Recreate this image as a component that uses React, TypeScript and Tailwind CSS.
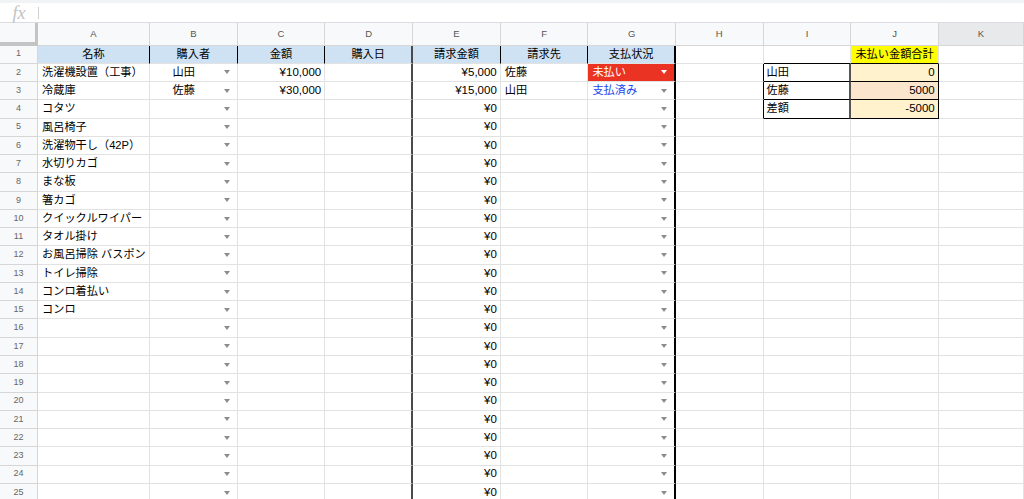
import React from "react";

const FONT = { fontFamily: '"Liberation Sans", "Noto Sans CJK JP", sans-serif' };

const letters = ["A", "B", "C", "D", "E", "F", "G", "H", "I", "J", "K"];
const widths = [
  "w-[112px]",
  "w-[87.6px]",
  "w-[87.6px]",
  "w-[88px]",
  "w-[87.6px]",
  "w-[87.6px]",
  "w-[87.6px]",
  "w-[87.6px]",
  "w-[87.8px]",
  "w-[87.4px]",
  "flex-1",
];

const colA = [
  "名称",
  "洗濯機設置（工事）",
  "冷蔵庫",
  "コタツ",
  "風呂椅子",
  "洗濯物干し（42P）",
  "水切りカゴ",
  "まな板",
  "箸カゴ",
  "クイックルワイパー",
  "タオル掛け",
  "お風呂掃除 バスポン",
  "トイレ掃除",
  "コンロ着払い",
  "コンロ",
];

function Arrow({ white }: { white?: boolean }) {
  return (
    <span
      className={
        white
          ? "mr-[7px] h-0 w-0 shrink-0 border-l-[3.5px] border-r-[3.5px] border-t-[4px] border-l-transparent border-r-transparent border-t-white"
          : "mr-[7px] h-0 w-0 shrink-0 border-l-[3.5px] border-r-[3.5px] border-t-[4px] border-l-transparent border-r-transparent border-t-[#8c8c8c]"
      }
    />
  );
}

function cellBorder(r: number, c: number): string {
  let cls = "border-r border-b border-[#e2e2e2]";
  if (c === 3) cls += " border-r-2 border-r-[#4a4a4a]";
  else if (c === 6) cls += " border-r-2 border-r-black";
  else if (r === 1 && (c === 0 || c === 1 || c === 2 || c === 4 || c === 5)) cls += " border-r-black";
  if (c === 7 && r >= 2 && r <= 4) cls += " border-r-black";
  if (c === 8 && r >= 2 && r <= 4) cls += " border-r-2 border-r-[#555555]";
  if (c === 9 && r >= 2 && r <= 4) cls += " border-r-black";
  if ((c === 8 || c === 9) && r >= 1 && r <= 4) cls += " border-b-black";
  return cls;
}

function cellBg(r: number, c: number): string {
  if (r === 1 && c <= 6) return "bg-[#cfe2f3]";
  if (r === 2 && c === 6) return "bg-[#ea3323]";
  if (r === 1 && c === 9) return "bg-[#ffff00]";
  if ((r === 2 || r === 4) && c === 9) return "bg-[#fff2cc]";
  if (r === 3 && c === 9) return "bg-[#fce5cd]";
  return "bg-white";
}

function CellContent({ r, c }: { r: number; c: number }) {
  const textCls = "text-[11.2px] text-[#000] leading-none";
  const numCls = "text-[11.5px] text-[#000] leading-none";
  if (r === 1) {
    if (c <= 6) {
      const h = ["名称", "購入者", "金額", "購入日", "請求金額", "請求先", "支払状況"][c];
      return <div className={"flex-1 text-center " + textCls}>{h}</div>;
    }
    if (c === 9) return <div className={"flex-1 text-center " + textCls}>未払い金額合計</div>;
    return null;
  }
  if (c === 0) {
    const v = colA[r - 1];
    return v ? <div className={"flex-1 pl-[4px] " + textCls}>{v}</div> : null;
  }
  if (c === 1) {
    const v = r === 2 ? "山田" : r === 3 ? "佐藤" : "";
    return (
      <>
        <div className={"flex-1 pr-[6px] text-center " + textCls}>{v}</div>
        <Arrow />
      </>
    );
  }
  if (c === 2) {
    const v = r === 2 ? "¥10,000" : r === 3 ? "¥30,000" : "";
    return <div className={"flex-1 pr-[3px] text-right " + numCls}>{v}</div>;
  }
  if (c === 4) {
    const v = r === 2 ? "¥5,000" : r === 3 ? "¥15,000" : "¥0";
    return <div className={"flex-1 pr-[3px] text-right " + numCls}>{v}</div>;
  }
  if (c === 5) {
    const v = r === 2 ? "佐藤" : r === 3 ? "山田" : "";
    return <div className={"flex-1 pl-[4px] " + textCls}>{v}</div>;
  }
  if (c === 6) {
    if (r === 2)
      return (
        <>
          <div className="flex-1 pl-[4px] text-[11.2px] leading-none text-white">未払い</div>
          <Arrow white />
        </>
      );
    if (r === 3)
      return (
        <>
          <div className="flex-1 pl-[4px] text-[11.2px] leading-none text-[#1a44f0]">支払済み</div>
          <Arrow />
        </>
      );
    return (
      <>
        <div className="flex-1" />
        <Arrow />
      </>
    );
  }
  if (c === 8) {
    const v = r === 2 ? "山田" : r === 3 ? "佐藤" : r === 4 ? "差額" : "";
    return <div className={"flex-1 pl-[3px] " + textCls}>{v}</div>;
  }
  if (c === 9) {
    const v = r === 2 ? "0" : r === 3 ? "5000" : r === 4 ? "-5000" : "";
    return <div className={"flex-1 pr-[3px] text-right " + numCls}>{v}</div>;
  }
  return null;
}

function Row({ r }: { r: number }) {
  return (
    <div className="flex h-[18.28px]">
      <div className="flex w-[38px] shrink-0 items-center justify-center border-r border-b border-[#d6d6d6] bg-[#f8f9fa] text-[9px] text-[#666]">
        {r}
      </div>
      {letters.map((_, c) => (
        <div
          key={c}
          className={
            "flex h-full shrink-0 items-center overflow-hidden whitespace-nowrap " +
            widths[c] +
            " " +
            cellBorder(r, c) +
            " " +
            cellBg(r, c)
          }
        >
          <CellContent r={r} c={c} />
        </div>
      ))}
    </div>
  );
}

export default function App() {
  const rows = Array.from({ length: 25 }, (_, i) => i + 1);
  return (
    <div className="h-[499px] w-[1024px] overflow-hidden bg-white" style={FONT}>
      <div className="h-[3px] bg-[#f1f3f4]" />
      <div className="flex h-[20px] items-center border-b border-[#dadce0] bg-white">
        <div className="flex w-[38px] items-center justify-center">
          <span
            className="text-[18px] italic leading-none text-[#c2c2c2]"
            style={{ fontFamily: '"Liberation Serif", serif' }}
          >
            fx
          </span>
        </div>
        <div className="h-[12px] w-px bg-[#d0d0d0]" />
      </div>
      <div className="flex h-[22.5px]">
        <div className="w-[38px] shrink-0 border-r-[3px] border-b-[4px] border-[#c4c4c4] bg-[#f8f9fa]" />
        {letters.map((l, c) => (
          <div
            key={l}
            className={
              "flex shrink-0 items-center justify-center border-r border-b border-[#d6d6d6] text-[9.5px] text-[#555] " +
              widths[c] +
              (c === 10 ? " bg-[#e8e9eb]" : " bg-[#f8f9fa]")
            }
          >
            {l}
          </div>
        ))}
      </div>
      {rows.map((r) => (
        <Row key={r} r={r} />
      ))}
    </div>
  );
}
